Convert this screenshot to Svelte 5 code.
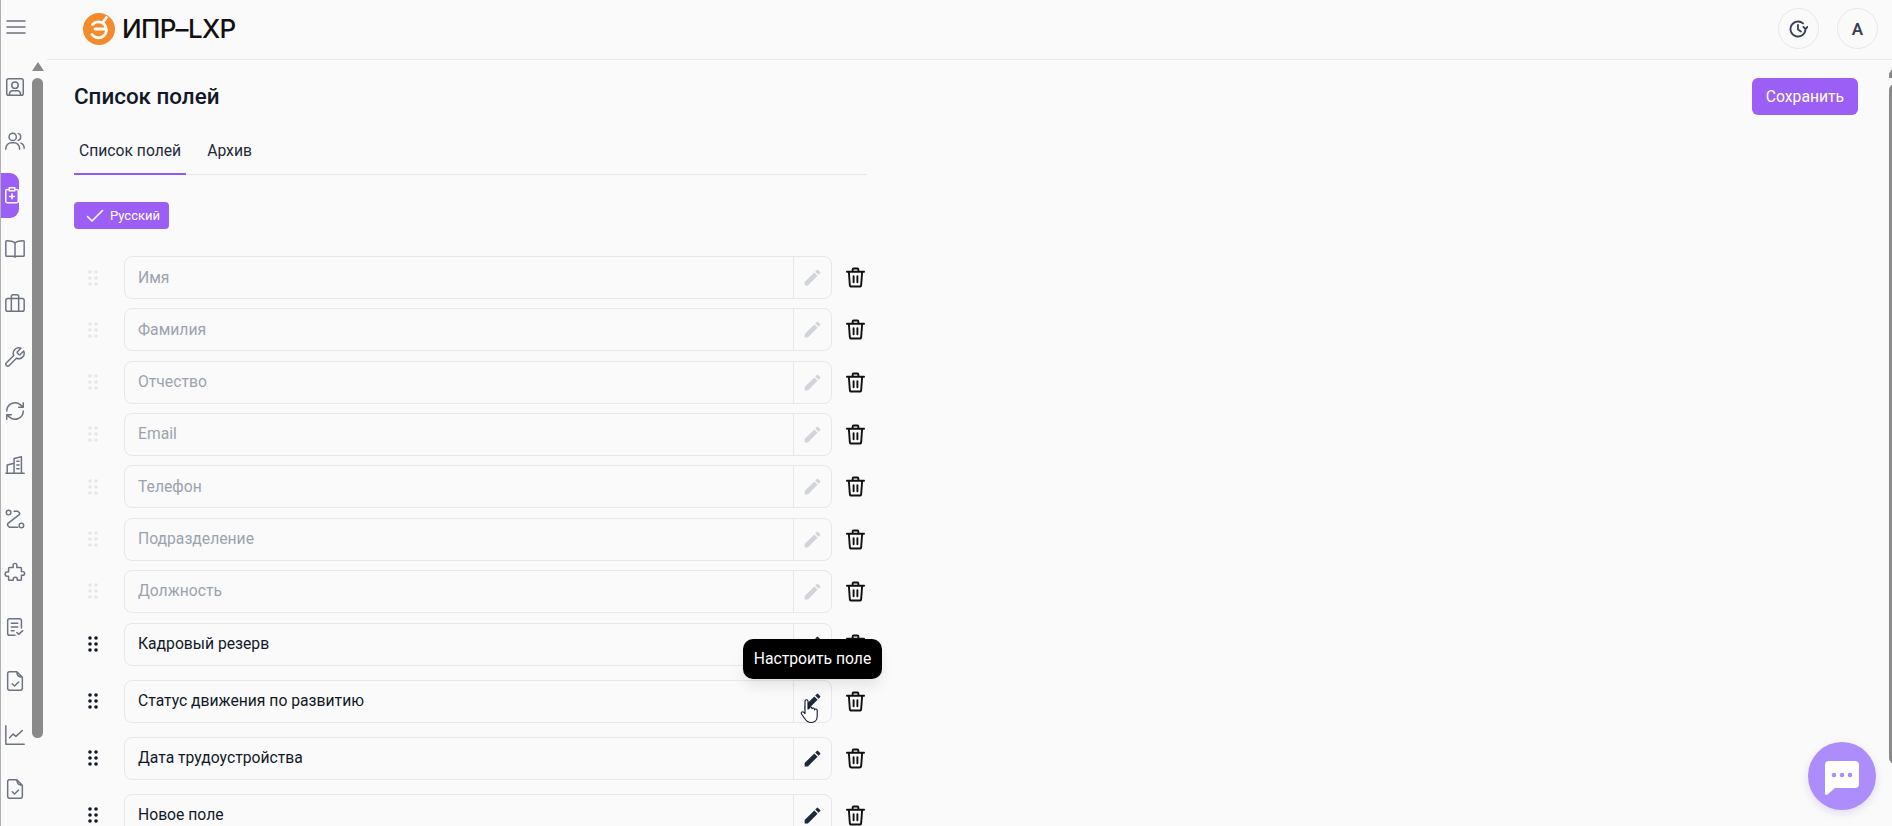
<script>
  const navIcons = [
    'M5 3h14a2 2 0 0 1 2 2v14a2 2 0 0 1-2 2H5a2 2 0 0 1-2-2V5a2 2 0 0 1 2-2zM12 6.500a3.500 3.500 0 1 0 0 7 3.500 3.500 0 0 0 0-7zM6 21v-1.500A3.500 3.500 0 0 1 9.500 16h5a3.500 3.500 0 0 1 3.500 3.500V21',
    'M9.500 3.500a4 4 0 1 0 0 8 4 4 0 0 0 0-8zM2 21v-1a6 6 0 0 1 6-6h3a6 6 0 0 1 6 6v1M15.500 3.700a4 4 0 0 1 0 7.600M18.500 14.300a6 6 0 0 1 3.500 5.700',
    null,
    'M12 5.500C10.500 3.500 8 3 3 3a1 1 0 0 0-1 1v15a1 1 0 0 0 1 1h7a2 2 0 0 1 2 1 2 2 0 0 1 2-1h7a1 1 0 0 0 1-1V4a1 1 0 0 0-1-1c-5 0-7.500.5-9 2.500zM12 5.500V21',
    'M4 7h16a2 2 0 0 1 2 2v10a2 2 0 0 1-2 2H4a2 2 0 0 1-2-2V9a2 2 0 0 1 2-2zM8 7V5a2 2 0 0 1 2-2h4a2 2 0 0 1 2 2v2M8 7v14M16 7v14',
    'M14.700 6.300a1 1 0 0 0 0 1.400l1.600 1.600a1 1 0 0 0 1.400 0l3.800-3.800a6 6 0 0 1-7.900 7.900l-7.900 7.900a2.100 2.100 0 0 1-3-3l7.900-7.900a6 6 0 0 1 7.900-7.900z',
    'M3 12a9 9 0 0 1 15-6.700L21 8M21 3v5h-5M21 12a9 9 0 0 1-15 6.700L3 16M3 21v-5h5',
    'M2 21h20M3.500 21v-9l7.500-2M11 21V5l8-2v18M14 8h2.500M14 12h2.500M14 16h2.500',
    'M5 2.500a2.500 2.500 0 1 0 0 5 2.500 2.500 0 0 0 0-5zM19 16.500a2.500 2.500 0 1 0 0 5 2.500 2.500 0 0 0 0-5zM11 3.500h4l2 2v1.500L4 17v2l2 2h9',
    'M10 3.500a2 2 0 0 1 4 0V6h4a1 1 0 0 1 1 1v3.500h1.500a2 2 0 0 1 0 4H19V19a1 1 0 0 1-1 1h-3.500v-1a2.200 2.200 0 0 0-4.500 0v1H6a1 1 0 0 1-1-1v-3.500H3.500a2.200 2.200 0 0 1 0-4.500H5V7a1 1 0 0 1 1-1h4z',
    'M6 3h11a2 2 0 0 1 2 2v8M12 21H6a2 2 0 0 1-2-2V5a2 2 0 0 1 2-2M8 8h7M8 12h7M8 16h3M14 18l2 2 4.500-4',
    'M14 2H6a2 2 0 0 0-2 2v16a2 2 0 0 0 2 2h12a2 2 0 0 0 2-2V8zM14 2c0 3 1 6 6 6M9 15l2.500 2.500L16 13',
    'M2 2v20h20M6 15l4-4 3 2.500L20 7',
    'M14 2H6a2 2 0 0 0-2 2v16a2 2 0 0 0 2 2h12a2 2 0 0 0 2-2V8zM14 2c0 3 1 6 6 6M9 15l2.500 2.500L16 13'
  ];
  const locked = ['Имя', 'Фамилия', 'Отчество', 'Email', 'Телефон', 'Подразделение', 'Должность'];
  const active = ['Кадровый резерв', 'Статус движения по развитию', 'Дата трудоустройства', 'Новое поле'];
  const rows = [
    ...locked.map((name) => ({ name, disabled: true })),
    ...active.map((name) => ({ name, disabled: false }))
  ];
</script>

<div class="page">
  <aside class="side">
    <button class="burger" aria-label="Меню">
      <svg width="20" height="16" viewBox="0 0 20 16"><path d="M1 2h18M1 8h18M1 14h18" /></svg>
    </button>
    <div class="side-body">
      <nav class="nav">
        {#each navIcons as d}
          {#if d}
            <span class="nav-item">
              <svg width="22" height="22" viewBox="0 0 24 24"><path {d} /></svg>
            </span>
          {:else}
            <span class="nav-item current">
              <svg width="20" height="24" viewBox="0 0 20 24">
                <path d="M4 4H3.500A2.500 2.500 0 0 0 1 6.500v14A2.500 2.500 0 0 0 3.500 23h13a2.500 2.500 0 0 0 2.500-2.500v-14A2.500 2.500 0 0 0 16.500 4H16M6 1.500h8V6H6zM10 10.500v7M6.500 14h7" />
              </svg>
            </span>
          {/if}
        {/each}
      </nav>
      <div class="side-scroll">
        <i class="arrow"></i>
        <i class="thumb"></i>
      </div>
    </div>
  </aside>

  <div class="column">
    <header class="top">
      <div class="brand">
        <svg class="logo" width="32" height="32" viewBox="0 0 32 32">
          <circle cx="16" cy="16" r="16" />
          <path d="M9 21.500A8 8 0 1 0 9.500 11.500M12 16h10.500M20.500 8.500l3-4" />
        </svg>
        <span>ИПР–LXP</span>
      </div>
      <div class="top-actions">
        <span class="round">
          <svg width="20" height="20" viewBox="0 0 24 24"><path d="M21 12a9 9 0 1 1-3-6.700M21 12l-2.500-2.500M21 12l2.500-2.500M12 7v5.500l3.500 2.500" /></svg>
        </span>
        <span class="round letter">A</span>
      </div>
    </header>

    <div class="content-wrap">
      <main class="content">
        <div class="title-row">
          <h1>Список полей</h1>
          <button class="save">Сохранить</button>
        </div>

        <div class="panel">
          <div class="tabs">
            <span class="tab on">Список полей</span>
            <span class="tab">Архив</span>
          </div>

          <span class="lang">
            <svg width="18" height="14" viewBox="0 0 18 14"><path d="M1.500 7.500l4.500 4.500L16.500 1.500" /></svg>
            Русский
          </span>

          <div class="list">
            {#each rows as row, i}
              <div class="row" class:disabled={row.disabled}>
                <svg class="grip" width="10" height="16" viewBox="0 0 10 16">
                  {#each [2, 8, 14] as y}
                    <circle cx="2" cy={y} r="1.800" />
                    <circle cx="8" cy={y} r="1.800" />
                  {/each}
                </svg>
                <div class="field">
                  <span class="name">{row.name}</span>
                  <span class="edit">
                    <svg width="21" height="21" viewBox="0 0 24 24"><path d="M3 17.250V21h3.750L17.810 9.940l-3.750-3.750L3 17.250zM20.710 7.040a1 1 0 0 0 0-1.410l-2.340-2.340a1 1 0 0 0-1.410 0l-1.830 1.830 3.750 3.750 1.830-1.830z" /></svg>
                  </span>
                </div>
                <span class="trash">
                  <svg width="19" height="21" viewBox="0 0 20 22"><path d="M1 5h18M7 5V2.500A1 1 0 0 1 8 1.500h4a1 1 0 0 1 1 1V5M3 5l1 13.500A2 2 0 0 0 6 20.500h8a2 2 0 0 0 2-2L17 5M8 9.500v6.500M12 9.500v6.500" /></svg>
                </span>
                {#if i === 7}
                  <span class="tooltip">Настроить поле</span>
                {/if}
                {#if i === 8}
                  <svg class="hand" width="20" height="25" viewBox="0 0 20 25">
                    <path d="M6 2.200a1.500 1.500 0 0 1 3 0V10l1.200-.4V9a1.400 1.400 0 0 1 2.700 0v.8a1.400 1.400 0 0 1 2.600.3v.8a1.400 1.400 0 0 1 2.700.4V17c0 3.500-2 6.500-6 6.500-3.500 0-5-1.500-6.500-4L2.500 15c-1-1.500.8-3 2.200-1.800L6 14.500z" />
                  </svg>
                {/if}
              </div>
            {/each}
          </div>
        </div>
      </main>
      <div class="page-scroll"><i class="arrow"></i><i class="thumb"></i></div>
    </div>
  </div>

  <button class="chat" aria-label="Чат">
    <svg width="36" height="36" viewBox="0 0 36 36">
      <path d="M5 1h26a4 4 0 0 1 4 4v19a4 4 0 0 1-4 4H11l-7.500 6.500A1.500 1.500 0 0 1 1 33V5a4 4 0 0 1 4-4z" />
      <circle cx="10" cy="15" r="2.300" /><circle cx="18" cy="15" r="2.300" /><circle cx="26" cy="15" r="2.300" />
    </svg>
  </button>
</div>

<style>
  :global(body) {
    margin: 0;
    background: #fafafa;
    overflow: hidden;
  }
  .page {
    position: relative;
    display: flex;
    width: 1892px;
    height: 826px;
    overflow: hidden;
    background: #fafafa;
    color: #111827;
    font-family: Roboto, 'Noto Sans', sans-serif;
  }
  svg path {
    fill: none;
    stroke: currentColor;
    stroke-linecap: round;
    stroke-linejoin: round;
  }
  .side {
    flex: none;
    width: 46px;
    border-left: 1px solid #b0b0b0;
    display: flex;
    flex-direction: column;
    color: #6b7280;
  }
  .burger {
    flex: none;
    width: 30px;
    height: 54px;
    padding: 0;
    border: 0;
    background: none;
    color: #6b7280;
    display: flex;
    align-items: center;
    justify-content: center;
  }
  .burger path { stroke-width: 1.600; }
  .side-body { display: flex; flex: 1; min-height: 0; }
  .nav {
    width: 31px;
    flex: none;
    display: flex;
    flex-direction: column;
  }
  .nav-item {
    flex: none;
    width: 28px;
    height: 54px;
    display: flex;
    align-items: center;
    justify-content: center;
    position: relative;
  }
  .nav-item:first-child { margin-top: 6px; }
  .nav-item svg path { stroke-width: 1.600; }
  .current { color: #fff; }
  .current::before {
    content: '';
    position: absolute;
    left: 0;
    top: 5px;
    width: 18px;
    height: 45px;
    background: #9b5ff6;
    border-radius: 0 9px 9px 0;
  }
  .current svg { position: relative; width: 14px; height: 20px; margin-left: -6px; }
  .current svg path { stroke-width: 2.200; }
  .side-scroll {
    width: 11px;
    padding-top: 8px;
    display: flex;
    flex-direction: column;
    align-items: center;
  }
  .arrow {
    display: block;
    flex: none;
    width: 0;
    height: 0;
    border-left: 6px solid transparent;
    border-right: 6px solid transparent;
    border-bottom: 9px solid #8a8a8a;
  }
  .thumb {
    display: block;
    width: 11px;
    height: 660px;
    margin-top: 7px;
    background: #8a8a8a;
    border-radius: 6px;
  }
  .column { flex: 1; min-width: 0; display: flex; flex-direction: column; }
  .top {
    flex: none;
    height: 59px;
    border-bottom: 1px solid #e5e7eb;
    display: flex;
    align-items: center;
    justify-content: space-between;
  }
  .brand {
    display: flex;
    align-items: center;
    gap: 7px;
    margin-left: 36px;
    margin-top: -2px;
    font: 500 26px/32px Inter, Roboto, sans-serif;
    letter-spacing: -0.7px;
    color: #111;
  }
  .logo circle { fill: #f58a2c; }
  .logo path { stroke: #fff; stroke-width: 2.800; }
  .top-actions { display: flex; gap: 18px; margin-right: 14px; margin-top: -2px; }
  .round {
    width: 39px;
    height: 39px;
    border: 1px solid #e5e7eb;
    border-radius: 50%;
    display: flex;
    align-items: center;
    justify-content: center;
    color: #374151;
  }
  .round svg { margin-left: -2px; }
  .round path { stroke-width: 2.200; }
  .letter { font-size: 17px; font-weight: 600; }
  .content-wrap { flex: 1; min-height: 0; display: flex; }
  .content { flex: 1; min-width: 0; padding: 18px 31px 0 27px; }
  .title-row {
    display: flex;
    align-items: center;
    justify-content: space-between;
    height: 37px;
  }
  h1 { margin: 0; font-size: 22.400px; font-weight: 500; line-height: 37px; color: #111827; }
  .save {
    width: 106px;
    height: 37px;
    border: 0;
    border-radius: 6px;
    background: #9b5ff6;
    color: #fff;
    font: 400 15.700px Roboto, sans-serif;
    padding: 0;
  }
  .panel { width: 793px; }
  .tabs {
    display: flex;
    margin-top: 18px;
    height: 41px;
    border-bottom: 1px solid #e5e7eb;
  }
  .tab {
    padding: 0 5px;
    margin-right: 16px;
    font-size: 15.700px;
    line-height: 36px;
    height: 40px;
    color: #1f2937;
  }
  .tab.on { border-bottom: 2px solid #8b5cf6; height: 40px; }
  .lang {
    display: inline-flex;
    align-items: center;
    gap: 6px;
    margin-top: 27px;
    height: 27px;
    width: 95px;
    box-sizing: border-box;
    padding-left: 12px;
    background: #9b5ff6;
    border-radius: 4px;
    color: #fff;
    font-size: 13px;
  }
  .lang path { stroke-width: 1.600; }
  .list { margin-top: 27px; }
  .row {
    position: relative;
    display: flex;
    align-items: center;
    height: 43px;
    margin-bottom: 14px;
  }
  .row.disabled { margin-bottom: 9.330px; }
  .row.disabled:nth-child(7) { margin-bottom: 10px; }
  .grip { margin-left: 14px; margin-right: 26px; flex: none; fill: #111827; }
  .disabled .grip { fill: #e5e7eb; }
  .field {
    flex: none;
    width: 708px;
    height: 43px;
    box-sizing: border-box;
    border: 1px solid #e5e7eb;
    border-radius: 8px;
    display: flex;
    align-items: center;
  }
  .name { flex: 1; padding-left: 13px; font-size: 15.700px; color: #111827; position: relative; top: -0.500px; }
  .disabled .name { color: #9ca3af; }
  .edit {
    flex: none;
    width: 37px;
    height: 41px;
    border-left: 1px solid #e5e7eb;
    display: flex;
    align-items: center;
    justify-content: center;
    color: #1f2937;
  }
  .edit path { fill: currentColor; stroke: none; }
  .disabled .edit { color: #d1d5db; }
  .trash { flex: none; margin-left: 14px; display: flex; color: #111; }
  .trash path { stroke-width: 2; }
  .tooltip {
    position: absolute;
    left: 669px;
    top: 16px;
    height: 40px;
    width: 139px;
    background: #000;
    color: #fff;
    border-radius: 10px;
    font-size: 15.700px;
    display: flex;
    align-items: center;
    justify-content: center;
    box-shadow: 0 8px 14px -2px rgba(17, 24, 39, 0.1);
    z-index: 2;
  }
  .hand { position: absolute; left: 725px; top: 19px; }
  .hand path { fill: #fff; stroke: #111827; stroke-width: 1.100; }
  .page-scroll {
    flex: none;
    width: 3px;
    overflow: hidden;
    padding-top: 9px;
    display: flex;
    flex-direction: column;
    align-items: flex-start;
  }
  .page-scroll .arrow { margin-left: -3px; }
  .page-scroll .thumb { height: 680px; width: 12px; border-radius: 6px; margin-top: 6px; }
  .chat {
    position: absolute;
    left: 1808px;
    top: 742px;
    width: 68px;
    height: 68px;
    padding: 3px 0 0;
    border: 0;
    border-radius: 50%;
    background: #ad8cfb;
    box-shadow: 0 3px 8px rgba(120, 90, 200, 0.2);
    display: flex;
    align-items: center;
    justify-content: center;
  }
  .chat svg path { fill: #fff; stroke: none; }
  .chat circle { fill: #ad8cfb; }
</style>
